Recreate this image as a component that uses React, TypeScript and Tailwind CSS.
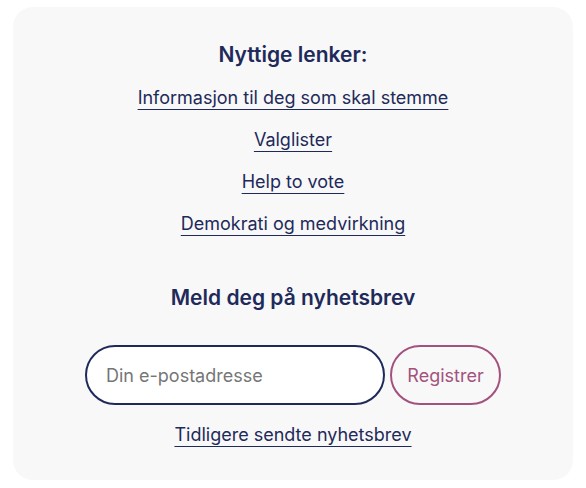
export default function App() {
  const links = [
    "Informasjon til deg som skal stemme",
    "Valglister",
    "Help to vote",
    "Demokrati og medvirkning",
  ];

  return (
    <div className="min-h-screen bg-white px-[13px] pt-[7px] font-['Inter',sans-serif]">
      <div className="flex flex-col items-center rounded-[20px] bg-[#f8f8f8] pt-[34px] pb-[31px] text-[#1e2a5a]">
        <h2 className="text-[21px] leading-7 font-semibold">Nyttige lenker:</h2>

        <ul className="mt-[15px] flex flex-col items-center gap-[14px]">
          {links.map((l) => (
            <li key={l}>
              <a href="#" className="text-[18px] leading-7 underline decoration-1 underline-offset-[5px]">
                {l}
              </a>
            </li>
          ))}
        </ul>

        <h2 className="mt-[46px] text-[21px] leading-7 font-semibold">Meld deg på nyhetsbrev</h2>

        <form className="mt-[33px] flex items-center gap-[5px]">
          <input
            type="email"
            placeholder="Din e-postadresse"
            className="h-[60px] w-[300px] rounded-full border-2 border-[#1e2a5a] bg-white px-[19px] text-[18px] placeholder:text-[#767676] outline-none"
          />
          <button
            type="button"
            className="h-[60px] w-[111px] rounded-full border-2 border-[#a3527f] text-[18px] text-[#a3527f]"
          >
            Registrer
          </button>
        </form>

        <a href="#" className="mt-[16px] text-[18px] leading-7 underline decoration-1 underline-offset-[5px]">
          Tidligere sendte nyhetsbrev
        </a>
      </div>
    </div>
  );
}
